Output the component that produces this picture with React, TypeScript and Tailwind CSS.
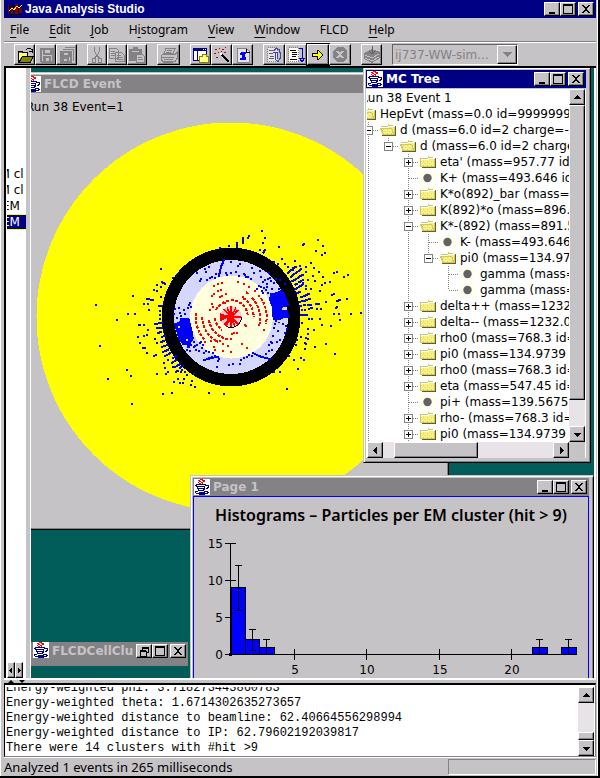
import { useState } from "react";
import type { ReactNode } from "react";

const RAISED =
  "border border-t-white border-l-white border-r-black border-b-black bg-[#c6c3c6] shadow-[inset_-1px_-1px_#848284]";

const UI_FONT = "font-['Noto_Sans',sans-serif]";
const WIDE_FONT = "font-['DejaVu_Sans',sans-serif]";

type NodeKind = "open" | "closed" | "leaf";

interface TreeRow {
  label: string;
  kind: NodeKind;
  // one character per level: space = nothing, | = line, + = elbow that goes on, L = last elbow
  guides: string;
}

const treeRows: TreeRow[] = [
  { label: "Run 38 Event 1", kind: "open", guides: "" },
  { label: "HepEvt (mass=0.0 id=9999999 charge=0.0)", kind: "open", guides: "L" },
  { label: "d (mass=6.0 id=2 charge=-0.33)", kind: "open", guides: " +" },
  { label: "d (mass=6.0 id=2 charge=-0.33)", kind: "open", guides: " |L" },
  { label: "eta' (mass=957.77 id=331)", kind: "closed", guides: " | +" },
  { label: "K+ (mass=493.646 id=321)", kind: "leaf", guides: " | +" },
  { label: "K*o(892)_bar (mass=896.1)", kind: "closed", guides: " | +" },
  { label: "K(892)*o (mass=896.1 id=313)", kind: "closed", guides: " | +" },
  { label: "K*-(892) (mass=891.59)", kind: "open", guides: " | +" },
  { label: "K- (mass=493.646 id=-321)", kind: "leaf", guides: " | |+" },
  { label: "pi0 (mass=134.9739 id=111)", kind: "open", guides: " | |L" },
  { label: "gamma (mass=0.0 id=22)", kind: "leaf", guides: " | | +" },
  { label: "gamma (mass=0.0 id=22)", kind: "leaf", guides: " | | L" },
  { label: "delta++ (mass=1232.0)", kind: "closed", guides: " | +" },
  { label: "delta-- (mass=1232.0)", kind: "closed", guides: " | +" },
  { label: "rho0 (mass=768.3 id=113)", kind: "closed", guides: " | +" },
  { label: "pi0 (mass=134.9739 id=111)", kind: "closed", guides: " | +" },
  { label: "rho0 (mass=768.3 id=113)", kind: "closed", guides: " | +" },
  { label: "eta (mass=547.45 id=221)", kind: "closed", guides: " | +" },
  { label: "pi+ (mass=139.5675 id=211)", kind: "leaf", guides: " | +" },
  { label: "rho- (mass=768.3 id=-213)", kind: "closed", guides: " | +" },
  { label: "pi0 (mass=134.9739 id=111)", kind: "closed", guides: " | +" },
];

const menus: [string, number][] = [
  ["File", 0],
  ["Edit", 0],
  ["Job", 0],
  ["Histogram", 1],
  ["View", 0],
  ["Window", 0],
  ["FLCD", -1],
  ["Help", 0],
];

const logLines = [
  "Energy-weighted phi: 3.718273443860783",
  "Energy-weighted theta: 1.6714302635273657",
  "Energy-weighted distance to beamline: 62.40664556298994",
  "Energy-weighted distance to IP: 62.79602192039817",
  "There were 14 clusters with #hit >9",
];

// Hits in detector units, three to the pixel; the beam line is at (303, 321).
const OUTER_HITS =
  "396,63 405,84 399,99 390,120 297,108 270,114 447,111 564,90 579,108 558,123 585,129 576,135 93,177 456,147 495,153 465,162 432,156 444,162 " +
  "474,171 483,180 528,171 543,159 552,174 567,186 579,201 585,219 600,216 612,189 621,186 642,201 654,195 549,198 555,213 570,243 576,225 606,255 612,252 651,267 588,276 " +
  "621,291 618,294 612,312 627,312 663,312 693,309 630,330 570,327 576,345 603,348 588,402 615,432 555,411 552,360 534,357 534,372 513,381 528,384 534,387 501,390 498,405 525,399 528,402 525,417 " +
  "492,450 513,444 522,450 504,477 471,537 450,486 432,486 477,438 516,300 525,300 537,327 546,327 561,297 573,297 516,339 528,228 528,237 543,237 534,210 486,198 528,186 510,168 519,219 " +
  "9,258 -102,285 -6,312 15,312 -39,330 -90,408 -66,507 -9,480 3,498 6,582 24,381 30,399 42,378 51,375 54,360 42,345 42,282 54,282 57,300 72,240 81,243 81,225 93,231 93,261 90,303 90,315 90,327 " +
  "75,387 81,399 51,429 72,438 78,435 114,450 102,459 105,474 108,492 114,486 81,492 132,516 99,552 126,549 237,549 282,552 159,519 183,525 195,531 186,513 162,507 144,507 153,486 165,486 171,495 192,492 129,471 150,519 156,480 129,204";

const OUTER_TRACKS = [
  "M357 78l-3 6M339 84v14M321 100v10M404 120l-4 8M519 104l3-2",
  "M474 189l6-5M483 180l5 0M489 174l9-3M483 200l9-7M498 189l15-11M486 214l9-5M500 206l7-5M510 199l8-4M496 224l5-3M507 217l11-7",
  "M495 238l6-3M507 231l11-7M501 249l9-3M513 261l12-3M528 255l9-3M510 275l15-3M528 270l12-3M510 287h3M522 286h3M534 284h10M537 296l9-2M513 315h18M558 282h10M621 273l9-3",
  "M28 345h3M51 267h6M64 270h5M96 216l9 6M87 288h9M75 342h7M87 339h8M81 354h16M84 369l9-3M96 381l8-3M93 396l11-4M96 411l16-6M39 414h6",
  "M99 426l16-7M105 438l15-8M126 459l12-9M132 471h3M138 486l6-4M129 444l10-6M141 468l8-5M150 474l8-6",
];

const INNER_HITS =
  "225,177 237,171 228,186 201,189 303,156 330,162 324,168 366,174 372,189 390,183 393,201 417,189 405,210 420,204 450,210 465,222 447,237 423,213 411,222 432,219 438,207 414,207 399,216 " +
  "288,189 291,195 303,189 318,186 327,198 342,192 348,201 345,195 354,201 363,207 240,204 246,201 255,204 231,210 213,207 210,213 258,192 387,228 381,237 393,231 396,243 402,234 408,240 414,249 399,249 411,231 426,237 " +
  "180,279 177,285 183,291 174,294 147,294 135,297 150,309 141,324 132,312 153,318 165,312 162,300 459,342 468,348 471,357 465,369 444,363 429,378 450,390 441,396 423,396 435,342 438,333 447,336 432,354 " +
  "426,399 417,405 417,423 426,420 408,432 411,444 366,438 351,441 342,444 357,435 333,450 330,462 309,462 297,465 261,471 264,453 267,447 255,438 246,441 237,444 " +
  "192,396 201,405 210,399 219,405 216,414 228,423 237,426 249,429 207,423 222,429 198,420 192,411 183,405 174,411 180,423 171,420 186,390 195,408 213,396";

const RED_HITS =
  "252,228 264,222 276,219 324,216 342,222 357,231 375,243 387,258 264,243 273,240 246,258 252,252 270,261 276,258 339,261 345,267 246,282 240,300 249,291 285,279 288,252 " +
  "243,393 252,411 279,402 294,408 279,423 303,426 351,414 336,402 321,369 312,369 303,387 345,345 348,348 402,360 387,345 255,420 225,396 306,372 270,393 291,387 261,393";

const RED_ARCS = [
  "M258 300A50 50 0 0 1 296 273",
  "M303 270A50 50 0 0 1 353 318",
  "M255 325A48 48 0 0 0 276 360",
  "M339 264A68 68 0 0 1 371 322",
  "M237 330A67 67 0 0 0 288 386",
  "M348 247l12 7M366 264A86 86 0 0 1 388 345",
  "M216 320A88 88 0 0 0 264 396",
  "M393 264A106 106 0 0 1 408 342",
  "M198 308A107 107 0 0 0 222 388",
];

function hitPath(hits: string) {
  return hits
    .split(" ")
    .map((p) => `M${p}h0.01`)
    .join("");
}

function EventDisplay() {
  return (
    <svg
      className="block"
      width="420"
      height="436"
      viewBox="-207 -224 420 436"
      shapeRendering="crispEdges"
      role="img"
      aria-label="Detector end view"
    >
      <circle r="194.500" fill="#ff0" />
      <circle r="69.500" fill="#000" />
      <circle r="57" fill="#d6d7ff" />
      <circle cx="0.500" r="41.500" fill="#ffffde" />
      <g transform="translate(-101 -107) scale(0.33333)" fill="none" strokeWidth="6">
        <g stroke="#00f" strokeLinecap="square">
          <path d={hitPath(OUTER_HITS)} />
          <path d={OUTER_TRACKS.join("")} />
          <path d={hitPath(INNER_HITS)} />
          <path d="M282 150L273 170L267 198M369 429L392 440L420 447M222 450L245 444L265 440" />
          <path
            fill="#00f"
            d="M422 252L440 250L453 243L462 252L468 270L473 285L460 292L458 303L470 303L475 320L458 322L452 326L432 326L428 312L428 290L421 270Z"
          />
          <path
            fill="#00f"
            d="M136 342L150 338L153 328L176 328L180 345L186 368L188 385L180 398L177 408L170 402L160 402L147 385L142 365Z"
          />
        </g>
        <path d="M456 297l9-3M444 333l15 0M144 351h6M168 390h6" stroke="#d6d7ff" />
        <path d={hitPath(RED_HITS)} stroke="red" strokeLinecap="square" />
        <path d={RED_ARCS.join("")} stroke="red" strokeDasharray="9 4" />
        <circle cx="303" cy="321" r="32" fill="#ffc8ce" />
        <path
          stroke="red"
          strokeWidth="5"
          d="M303 289V350M273 321H334M281 298L327 345M283 344L324 300M291 292L315 350M288 349L318 293"
        />
        <circle cx="301" cy="322" r="11" fill="red" />
        <path fill="red" d="M271 310L300 320L271 334Z" />
        <path d="M334 322A31 31 0 0 1 291 350" stroke="#000" strokeWidth="3" />
      </g>
    </svg>
  );
}

function JavaCup() {
  return (
    <svg className="h-4 w-4 shrink-0" viewBox="0 0 16 16" shapeRendering="crispEdges" aria-hidden="true">
      <path fill="#fff" d="M0 0h16v16H0z" />
      <path
        fill="none"
        stroke="red"
        d="M6 0.500h3M4 1.500h2M8 1.500h3M5 2.500h2M9 2.500h2M4 3.500h1M7 3.500h2M5 4.500h2M8 4.500h1"
      />
      <path
        fill="none"
        stroke="#000084"
        d="M2 5.500h10M1 6.500h2M11 6.500h4M2 7.500h9M14 7.500h1M3 8.500h1M10 8.500h1M13 8.500h2M3 9.500h8M12 9.500h2M4 10.500h1M9 10.500h2M4 11.500h6M1 12.500h3M10 12.500h4M1 13.500h1M5 13.500h6M13 13.500h2M2 14.500h12M5 15.500h6"
      />
    </svg>
  );
}

function Glyph({ children, size = 18 }: { children: ReactNode; size?: number }) {
  return (
    <svg
      width={size}
      height={size}
      viewBox={`0 0 ${size} ${size}`}
      shapeRendering="crispEdges"
      fill="none"
      aria-hidden="true"
      className="shrink-0"
    >
      {children}
    </svg>
  );
}

const controlMarks = {
  Minimize: <path d="M3 9h6v2H3z" fill="#000" />,
  Restore: <path d="M4 2h6v5H8M4 3h6M4 2v3M2 5.500h6M2 6.500h6V11H2V5" stroke="#000" />,
  Maximize: <path d="M1.500 1.500h9v9h-9zM1 2.500h10" stroke="#000" />,
  Close: <path d="M2 2h2v1h1v1h2V3h1V2h2v1H9v1H8v1H7v2h1v1h1v1h1v1H8V9H7V8H5v1H4v1H2V9h1V8h1V7h1V5H4V4H3V3H2z" fill="#000" />,
};

function WindowControls({ restore = false }: { restore?: boolean }) {
  const names = [restore ? "Restore" : "Minimize", "Maximize", "Close"] as const;
  return (
    <div className="ml-auto flex h-[18px] shrink-0 items-center pr-0.5">
      {names.map((name) => (
        <button
          key={name}
          type="button"
          aria-label={name}
          className={`flex h-[14px] w-4 items-center justify-center ${RAISED} ${name === "Close" ? "ml-0.5" : ""}`}
        >
          <Glyph size={12}>{controlMarks[name]}</Glyph>
        </button>
      ))}
    </div>
  );
}

interface FrameProps {
  title: string;
  active?: boolean;
  className: string;
  controls?: boolean;
  children: ReactNode;
}

function Frame({ title, active = false, className, controls = true, children }: FrameProps) {
  return (
    <section
      className={`absolute flex flex-col border border-[#c6c3c6] border-r-black border-b-black bg-[#c6c3c6] pt-0.5 pr-1 pb-1 pl-0.5 shadow-[inset_1px_1px_#fff,inset_-1px_-1px_#848284] ${className}`}
    >
      <header
        className={`flex h-[18px] shrink-0 items-center gap-[3px] pl-px ${active ? "bg-[#000084] text-white" : "bg-[#848284] text-[#c6c3c6]"}`}
      >
        <JavaCup />
        <h2 className={`text-xs font-bold whitespace-nowrap ${WIDE_FONT}`}>{title}</h2>
        {controls && <WindowControls />}
      </header>
      {children}
    </section>
  );
}

const arrows = {
  up: "M5 3h1v1h1v1h1v1h1v1H2V6h1V5h1V4h1z",
  down: "M2 4h7v1H8v1H7v1H6v1H5V7H4V6H3V5H2z",
  left: "M7 2v7H6V8H5V7H4V6H3V5h1V4h1V3h1V2z",
  right: "M4 2v7h1V8h1V7h1V6h1V5H7V4H6V3H5V2z",
  tinyLeft: "M6 3v5H5V7H4V6H3V5h1V4h1V3z",
  tinyRight: "M4 3v5h1V7h1V6h1V5H6V4H5V3z",
};

function ArrowButton({ dir, className = "h-4 w-4" }: { dir: keyof typeof arrows; className?: string }) {
  return (
    <button
      type="button"
      aria-label={`Scroll ${dir}`}
      className={`flex shrink-0 items-center justify-center overflow-hidden ${RAISED} ${className}`}
    >
      <Glyph size={11}>
        <path d={arrows[dir]} fill="#000" />
      </Glyph>
    </button>
  );
}

function NodeIcon({ kind }: { kind: NodeKind }) {
  if (kind === "leaf") {
    return (
      <svg width="16" height="14" viewBox="0 0 16 14" aria-hidden="true">
        <path fill="#fffff0" d="M0 0h16v14H0z" />
        <circle cx="7.500" cy="7" r="4.200" fill="#636163" />
      </svg>
    );
  }
  return (
    <svg width="16" height="14" viewBox="0 0 16 14" shapeRendering="crispEdges" aria-hidden="true">
      <path fill="#636121" d="M2 3h14v10H2z" />
      <path fill="#ceca63" d="M0 3h8V1h5v2h2v9H0z" />
      <path fill="#f7ef84" d="M1 4h13v7H1z" />
      <path fill="#fff" d="M9 1h4v1H9zM1 4h7V3h7v1H8v1H1z" />
      {kind === "open" && (
        <>
          <path fill="#fff" d="M0 0h8v1H0zM0 0v5h1V0zM0 7v6h2v-3H1V7z" />
          <path fill="#ceca63" d="M0 5h12l3 7H3z" />
          <path fill="#f7ef84" d="M2 6h9l2 5H4z" />
        </>
      )}
      <path fill="#dcd66b" d="M3 6h1v1H3zM7 6h1v1H7zM11 6h1v1h-1zM5 8h1v1H5zM9 8h1v1H9zM3 10h1v1H3zM7 10h1v1H7zM11 10h1v1h-1z" />
    </svg>
  );
}

function Guide({ mark }: { mark: string }) {
  return (
    <svg width="20" height="16" viewBox="0 0 20 16" fill="none" stroke="#848284" strokeDasharray="1 1" shapeRendering="crispEdges" aria-hidden="true">
      {mark === "|" || mark === "+" ? <path d="M10.500 0v16" /> : null}
      {mark === "L" ? <path d="M10.500 0v8" /> : null}
      {mark === "+" || mark === "L" ? <path d="M11 8.500h9" /> : null}
    </svg>
  );
}

function TreeItem({ row }: { row: TreeRow }) {
  const cells = row.guides.split("");
  return (
    <li className="flex h-4 items-center whitespace-nowrap">
      {cells.map((mark, i) =>
        i === cells.length - 1 && row.kind !== "leaf" ? (
          <button key={i} type="button" aria-label={`Toggle ${row.label}`} className="relative h-4 w-5 shrink-0">
            <Guide mark={mark} />
            <svg className="absolute top-1 left-1.5" width="9" height="9" viewBox="0 0 9 9" shapeRendering="crispEdges" aria-hidden="true">
              <path d="M0.500 0.500h8v8h-8z" fill="#fff" stroke="#848284" />
              <path d={row.kind === "closed" ? "M2 4.500h5M4.500 2v5" : "M2 4.500h5"} stroke="#000" />
            </svg>
          </button>
        ) : (
          <span key={i} className="h-4 w-5 shrink-0">
            <Guide mark={mark} />
          </span>
        ),
      )}
      <span className="flex w-[22px] shrink-0 pl-0.5">
        <NodeIcon kind={row.kind} />
      </span>
      <span className="text-xs leading-4">{row.label}</span>
    </li>
  );
}

function McTree() {
  return (
    <div className="mt-px grid min-h-0 flex-1 grid-cols-[minmax(0,1fr)_16px] grid-rows-[minmax(0,1fr)_16px] bg-white pr-px pl-px">
      <div className={`overflow-hidden ${WIDE_FONT}`}>
        <ul className="-ml-[29px] pt-px">
          {treeRows.map((row, i) => (
            <TreeItem key={i} row={row} />
          ))}
        </ul>
      </div>
      <div className="flex flex-col bg-[#e7e3e7]">
        <ArrowButton dir="up" />
        <div className={`h-[295px] ${RAISED}`} />
        <div className="flex-1" />
        <ArrowButton dir="down" />
      </div>
      <div className="flex bg-[#e7e3e7]">
        <ArrowButton dir="left" />
        <div className={`ml-[11px] w-[84px] ${RAISED}`} />
        <div className="flex-1" />
        <ArrowButton dir="right" />
      </div>
      <div className="bg-[#c6c3c6]" />
    </div>
  );
}

const bins = [
  { x: 36, w: 14, n: 9, lo: 6, hi: 12 },
  { x: 50, w: 14, n: 2, lo: 0.6, hi: 3.4 },
  { x: 64, w: 15, n: 1, lo: 0, hi: 2 },
  { x: 337, w: 15, n: 1, lo: 0, hi: 2 },
  { x: 366, w: 15, n: 1, lo: 0, hi: 2 },
];

function Histogram() {
  const base = 126;
  const y = (n: number) => Math.round(base - n * 7.4);
  return (
    <svg
      width="390"
      height="154"
      viewBox="-1 0 390 154"
      className={`mt-[3px] block text-xs ${WIDE_FONT}`}
      shapeRendering="crispEdges"
      role="img"
      aria-label="Particles per EM cluster"
    >
      {bins.map((b) => {
        const mid = b.x + 7;
        return (
          <g key={b.x} stroke="#000">
            <rect x={b.x + 0.5} y={y(b.n) + 0.5} width={b.w} height={base - y(b.n)} fill="#00f" />
            <path d={`M${mid + 0.5} ${y(b.hi)}V${y(b.lo) + 1}M${mid - 3} ${y(b.hi) + 0.5}h7M${mid - 3} ${y(b.lo) + 0.5}h7`} />
          </g>
        );
      })}
      <path stroke="#000" d="M35.500 15V127M35 126.500H382M34 125.500h3M34 127.500h3" />
      {[0, 5, 10, 15].map((n) => (
        <g key={n}>
          <path stroke="#000" d={`M30 ${y(n) + 0.5}h${n >= 10 ? 11 : 6}`} />
          <text x="28" y={y(n) + 5} textAnchor="end">
            {n}
          </text>
        </g>
      ))}
      {[5, 10, 15, 20].map((n, i) => {
        const x = Math.round(99 + i * 72.3);
        return (
          <g key={n}>
            <path stroke="#000" d={`M${x + 0.5} 121v11`} />
            <text x={x + 1} y="146" textAnchor="middle">
              {n}
            </text>
          </g>
        );
      })}
    </svg>
  );
}

const floppy = (
  <path d="M3.500 2.500h12v13h-11l-1-1zM6.500 3v5h7V3M6.500 15v-4h6v4M7 12.500h2M7 13.500h2" stroke="#848284" strokeWidth="2" />
);

const tools: { width: string; items: { name: string; off?: boolean; hot?: boolean; icon: ReactNode }[] }[] = [
  {
    width: "w-[21px]",
    items: [
      {
        name: "Open",
        icon: (
          <>
            <path d="M2 16V6h1V5h3v1h6v4h5l-3 6z" fill="#848200" />
            <path d="M3 7h8v3H6l-3 5z" fill="#ffff84" />
            <path d="M2.500 16V5.500h4v1h5V10M2 16.500h12l3.500-6h-11L3 16M10 3.500h1M11 2.500h4M15 3.500h1v3M13 5.500h4" stroke="#000" />
          </>
        ),
      },
      { name: "Save", off: true, icon: floppy },
      {
        name: "Save all",
        off: true,
        icon: (
          <>
            <path d="M7 1.500h10v11M5 3.500h10v11" stroke="#848284" />
            <path d="M2.500 5.500h10v10h-10zM5 6v4h6V6M5 15v-3h5v3" stroke="#848284" strokeWidth="2" />
          </>
        ),
      },
    ],
  },
  {
    width: "w-5",
    items: [
      {
        name: "Cut",
        off: true,
        icon: (
          <path d="M6.500 1v4l2 4 3 3M11.500 1v4l-2 4-3 3M4.500 12.500h3v4h-3zM10.500 12.500h3v4h-3z" stroke="#848284" />
        ),
      },
      {
        name: "Copy",
        off: true,
        icon: (
          <path
            d="M1.500 2.500h7l2 2v8h-9zM3 5.500h4M3 7.500h5M3 9.500h5M7.500 6.500h6l3 3v6h-9zM9 9.500h4M9 11.500h6M9 13.500h6"
            stroke="#848284"
          />
        ),
      },
      {
        name: "Paste",
        off: true,
        icon: (
          <>
            <path d="M1 3h4V1h5v2h4v6H8v6H1z" fill="#848284" />
            <path d="M4 5.500h7" stroke="#c6c3c6" />
            <path d="M8.500 8.500h6l2 2v6h-8zM10 11.500h4M10 13.500h5" stroke="#848284" />
          </>
        ),
      },
    ],
  },
  {
    width: "w-[23px]",
    items: [
      {
        name: "Print",
        off: true,
        icon: (
          <path
            d="M6 2.500h9l-2 5H4zM7 4.500h5M6 6.500h5M2 8.500h13l2-2v6l-2 3H3l-2-2v-5M2 11.500h12M4 13.500h9M3 16.500h10"
            stroke="#848284"
          />
        ),
      },
    ],
  },
  {
    width: "w-[21px]",
    items: [
      {
        name: "New page",
        icon: (
          <>
            <path d="M1.500 2.500h13v12h-13z" fill="#fff" stroke="#000084" />
            <path d="M1 2h14v3H1z" fill="#000084" />
            <path d="M11 3.500h1M13 3.500h1" stroke="#fff" />
            <path d="M5.500 5v9" stroke="#000084" />
            <path d="M7.500 10.500h3v-2h4v2h2v6h-9z" fill="#ffff84" stroke="#848200" />
          </>
        ),
      },
      {
        name: "Wizard",
        icon: (
          <>
            <path d="M8 8l8 8" stroke="#000" strokeWidth="2" />
            <path d="M7 7h2v2H7z" fill="#fff" />
            <path d="M2 3.500h2M6 2.500h1M9 3.500h2M1 7.500h2M5 6.500h1M11 6.500h2M3 11.500h2M12 1.500h1M8 5.500h1" stroke="#c00000" />
          </>
        ),
      },
      {
        name: "Program",
        icon: (
          <>
            <path d="M3.500 2.500h9l3 3v11h-12z" fill="#e7e3e7" stroke="#848284" />
            <path d="M7 6h5v2h-1v3h1v3H6v-2h2V9H6V7h1z" fill="#00f" />
            <path d="M12.500 3v3h3" stroke="#000" />
          </>
        ),
      },
    ],
  },
  {
    width: "w-[22px]",
    items: [
      {
        name: "Rewind",
        icon: (
          <>
            <path d="M2.500 1.500h10v14h-10z" fill="#e7e3e7" stroke="#848284" strokeDasharray="1 1" />
            <path d="M4 4.500h5M4 7.500h4M5 10.500h4M4 12.500h5" stroke="#636163" />
            <path d="M9 4.500l2-2 3 1 1 3v6l-2 3-3-2v-8M12 6v7M8 6h5" stroke="#4244a5" />
          </>
        ),
      },
      {
        name: "Run",
        icon: (
          <>
            <path d="M1.500 1.500h10v14h-10z" fill="#fff" stroke="#848284" strokeDasharray="1 1" />
            <path d="M3 4.500h6M5 6.500h5M5 8.500h5M5 10.500h4M3 13.500h7" stroke="#000" />
            <path d="M12 2.500h3v10M12 12h6l-3 4z" stroke="#0000c6" />
          </>
        ),
      },
      { name: "Step", hot: true, icon: <path d="M3.500 7.500h5v-3h1l4.500 4.500-4.500 4.500h-1v-3h-5z" fill="#ff0" stroke="#000" /> },
      {
        name: "Stop",
        off: true,
        icon: (
          <>
            <path d="M6 1h6l4 4v7l-4 4H6l-4-4V5z" fill="#848284" />
            <path d="M6 5l6 7M12 5l-6 7" stroke="#c6c3c6" strokeWidth="2" />
          </>
        ),
      },
    ],
  },
  {
    width: "w-[21px]",
    items: [
      {
        name: "Load data",
        off: true,
        icon: (
          <>
            <path d="M1 7l8-4 8 3v6l-8 5-8-4z" fill="#848284" />
            <path d="M2 9l7 3 7-4M2 12l7 3 7-4" stroke="#c6c3c6" />
            <path d="M9 0v8M6 5l3 3 3-3" stroke="#636163" />
          </>
        ),
      },
    ],
  },
];

function Toolbar() {
  return (
    <div className="flex h-6 shrink-0 items-center gap-2.5 border-t border-t-white pl-2.5">
      {tools.map((group, i) => (
        <div key={i} className="flex">
          {group.items.map((tool) => (
            <button
              key={tool.name}
              type="button"
              aria-label={tool.name}
              disabled={tool.off}
              className={`flex h-[21px] items-center justify-center overflow-hidden ${group.width} ${RAISED} ${tool.hot ? "outline outline-black" : ""}`}
            >
              <Glyph>{tool.icon}</Glyph>
            </button>
          ))}
        </div>
      ))}
      <div className="relative flex">
        <select
          aria-label="Data set"
          disabled
          className={`h-[21px] w-[126px] appearance-none border border-t-[#636163] border-r-white border-b-white border-l-[#636163] bg-[#c6c3c6] pl-0.5 text-xs text-[#848284] opacity-100 ${WIDE_FONT}`}
        >
          <option>ij737-WW-sim...</option>
        </select>
        <span className={`pointer-events-none absolute top-px right-px flex h-[19px] w-5 items-center justify-center ${RAISED}`}>
          <Glyph size={11}>
            <path d="M1 3h9v1H9v1H8v1H7v1H6v1H5V7H4V6H3V5H2V4H1z" fill="#848284" />
          </Glyph>
        </span>
      </div>
    </div>
  );
}

const folders = [
  { label: "EM cl", shift: "-ml-[15px]" },
  { label: "EM cl", shift: "-ml-[15px]" },
  { label: "EM", shift: "-ml-[5px]" },
  { label: "EM", shift: "-ml-[5px]" },
];

function SidePanel() {
  const [selected, setSelected] = useState(3);
  return (
    <aside className="flex w-[27px] shrink-0 flex-col border-r border-l-2 border-black bg-white">
      <div className="flex flex-1 flex-col border-r-4 border-[#c6c3c6] pl-px shadow-[1px_0_#fff]">
        <ul className={`flex-1 overflow-hidden pt-[98px] text-xs ${WIDE_FONT}`}>
          {folders.map((f, i) => (
            <li key={i}>
              <button
                type="button"
                onClick={() => setSelected(i)}
                className={`block h-4 w-full overflow-hidden text-left leading-[14px] whitespace-nowrap ${i === selected ? "border-y border-[#ff0] bg-[#000084] text-white" : "border-y border-transparent"}`}
              >
                <span className={f.shift}>{f.label}</span>
              </button>
            </li>
          ))}
        </ul>
        <div className="flex">
          <ArrowButton dir="tinyLeft" className="h-4 w-2" />
          <ArrowButton dir="tinyRight" className="h-4 w-2" />
        </div>
      </div>
    </aside>
  );
}

function MenuLabel({ text, hot }: { text: string; hot: number }) {
  if (hot < 0) return <>{text}</>;
  return (
    <>
      {text.slice(0, hot)}
      <span className="underline underline-offset-3">{text[hot]}</span>
      {text.slice(hot + 1)}
    </>
  );
}

export default function App() {
  return (
    <div className={`flex h-screen w-full flex-col overflow-hidden border-b-2 border-black bg-[#c6c3c6] text-black ${UI_FONT}`}>
      <div className="flex min-h-0 flex-1 flex-col border-r-2 border-r-black pr-0.5 pl-1 shadow-[inset_1px_0_#fff,inset_-1px_0_#fff]">
        <header className="flex h-[18px] shrink-0 items-center gap-[3px] bg-[#000084] pl-1 text-white">
          <svg className="shrink-0" width="14" height="12" viewBox="0 0 14 12" shapeRendering="crispEdges" aria-hidden="true">
            <path d="M0 2h2v8H0zM3 4h3v8H3zM7 1h3v10H7zM11 5h3v5h-3z" fill="#840000" />
            <path d="M1 1v10h12M5 2v8M10 3v7" stroke="#000" fill="none" />
            <path d="M1 8l3-3 2 2 3-4 2 2 3-3" stroke="#ff0" fill="none" />
          </svg>
          <h1 className="font-['Liberation_Sans',sans-serif] text-xs font-bold">Java Analysis Studio</h1>
          <WindowControls />
        </header>
        <nav className="flex h-6 shrink-0 items-center gap-5 border-b border-[#848284] pl-1.5">
          {menus.map(([text, hot]) => (
            <button key={text} type="button" className="text-xs">
              <MenuLabel text={text} hot={hot} />
            </button>
          ))}
        </nav>
        <Toolbar />

        <main className="flex min-h-0 flex-1 border-t-2 border-black">
          <SidePanel />
          <div className="relative min-w-0 flex-1 overflow-hidden border-r-2 border-r-white bg-[#005d5a]">
            <Frame title="FLCD Event" className="top-1 -left-[10px] h-[458px] w-[428px]" controls={false}>
              <div className="relative min-h-0 flex-1 overflow-hidden">
                <p className={`absolute top-1.5 left-0.5 text-xs ${WIDE_FONT}`}>Run 38 Event=1</p>
                <EventDisplay />
              </div>
            </Frame>
            <Frame title="MC Tree" active className="-top-px left-[332px] h-[396px] w-[228px]">
              <McTree />
            </Frame>
            <Frame title="Page 1" className="top-[407px] left-[159px] h-56 w-[404px]">
              <div className="min-h-0 flex-1 border border-[#00f] pt-2">
                <h3 className={`text-center text-base leading-5 font-semibold whitespace-nowrap ${UI_FONT}`}>
                  Histograms – Particles per EM cluster (hit &gt; 9)
                </h3>
                <Histogram />
              </div>
            </Frame>
            <div className="absolute top-[574px] left-0 flex h-6 w-[157px] items-start gap-[3px] bg-[#848284] pl-0.5 text-[#c6c3c6]">
              <JavaCup />
              <span className={`min-w-0 flex-1 overflow-hidden text-xs leading-[18px] font-bold whitespace-nowrap ${WIDE_FONT}`}>
                FLCDCellClusterFinder
              </span>
              <WindowControls restore />
            </div>
          </div>
        </main>

        <div className="flex h-[5px] shrink-0 items-end gap-1.5 border-t-2 border-white pl-1">
          <svg width="18" height="3" viewBox="0 0 18 3" aria-hidden="true">
            <path d="M0 3l3-3 3 3zM11 0h6l-3 3z" />
          </svg>
        </div>

        <section aria-label="Log" className="flex h-[74px] shrink-0 border-t-2 border-r border-b border-l border-black border-r-[#848284] border-b-[#848284] bg-white pt-0.5 pr-px">
          <div className="flex min-w-0 flex-1 flex-col justify-end overflow-hidden pl-px">
            {logLines.map((line) => (
              <p key={line} className="shrink-0 font-['Liberation_Mono',monospace] text-xs leading-[15px] whitespace-pre">
                {line}
              </p>
            ))}
          </div>
          <div className="flex w-4 flex-col bg-[#e7e3e7]">
            <ArrowButton dir="up" />
            <div className="flex-1" />
            <div className={`h-2 ${RAISED}`} />
            <ArrowButton dir="down" />
          </div>
        </section>

        <footer className="flex h-[19px] shrink-0 items-center border-t border-white">
          <p className="flex-1 text-[13px] leading-4">Analyzed 1 events in 265 milliseconds</p>
          <div className="h-4 w-1/4 border border-t-[#848284] border-r-white border-b-white border-l-[#848284]" />
        </footer>
      </div>
    </div>
  );
}
